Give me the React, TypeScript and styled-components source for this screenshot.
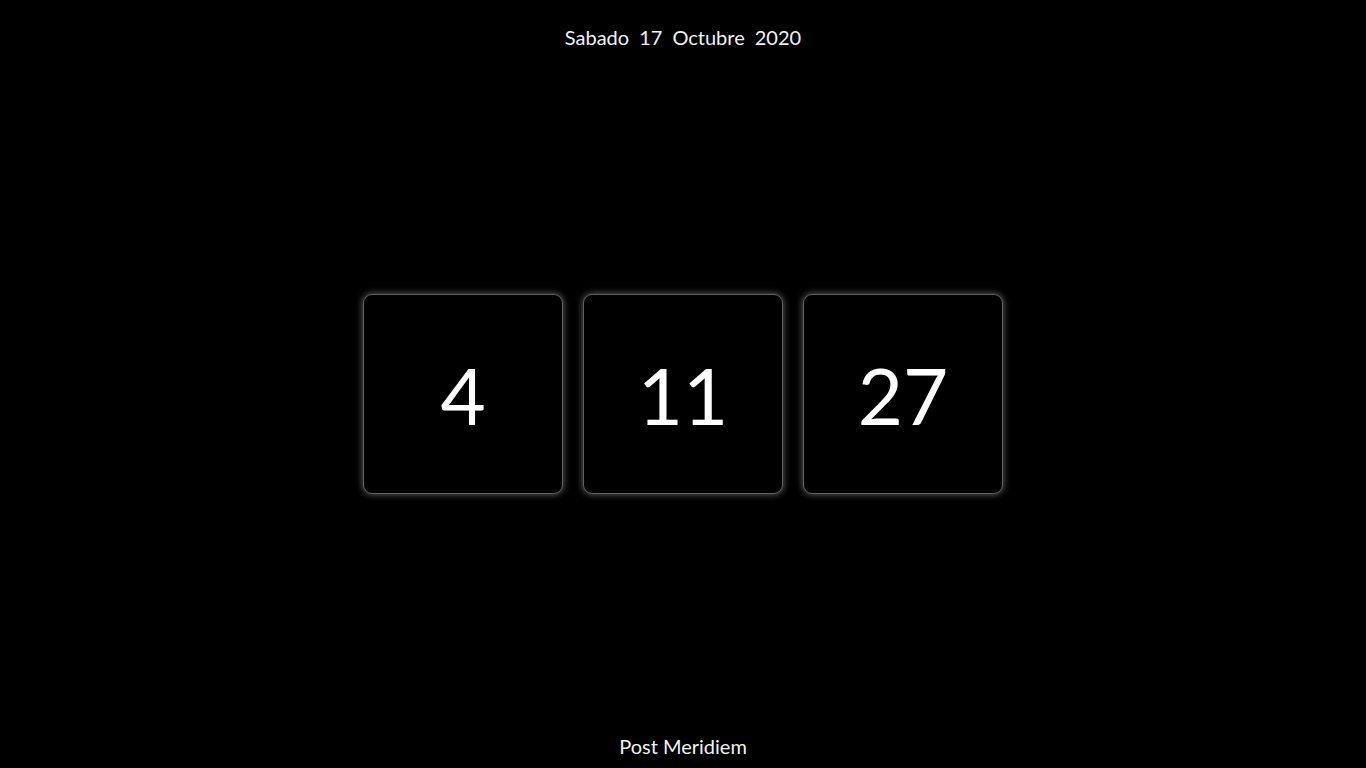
import styled, { createGlobalStyle } from "styled-components";

const GlobalStyle = createGlobalStyle`
  html, body {
    margin: 0;
    padding: 0;
    background: #000;
    color: #fff;
    font-family: Lato, "Noto Sans", sans-serif;
  }
`;

const Page = styled.div`
  height: 100vh;
  display: flex;
  flex-direction: column;
  align-items: center;
`;

const DateLine = styled.header`
  display: flex;
  gap: 10px;
  padding-top: 25px;
  font-size: 20px;
  line-height: 24px;
  color: #f2f2f2;
`;

const Main = styled.main`
  flex: 1;
  display: flex;
  align-items: center;
  justify-content: center;
  gap: 20px;
  padding-top: 4px;
`;

const Card = styled.div`
  width: 200px;
  height: 200px;
  box-sizing: border-box;
  border-radius: 9px;
  background: #000;
  border: 1px solid #606060;
  box-shadow: 0 0 6px 1px rgba(255, 255, 255, 0.32);
  display: flex;
  align-items: center;
  justify-content: center;
  font-size: 78px;
  padding-top: 2px;
  color: #fff;
`;

const Footer = styled.footer`
  font-size: 20px;
  line-height: 24px;
  padding-bottom: 10px;
  color: #f2f2f2;
`;

export default function App() {
  const date = ["Sabado", "17", "Octubre", "2020"];
  const time = ["4", "11", "27"];
  return (
    <>
      <GlobalStyle />
      <Page>
        <DateLine>
          {date.map((d) => (
            <span key={d}>{d}</span>
          ))}
        </DateLine>
        <Main>
          {time.map((t, i) => (
            <Card key={i}>{t}</Card>
          ))}
        </Main>
        <Footer>Post Meridiem</Footer>
      </Page>
    </>
  );
}
